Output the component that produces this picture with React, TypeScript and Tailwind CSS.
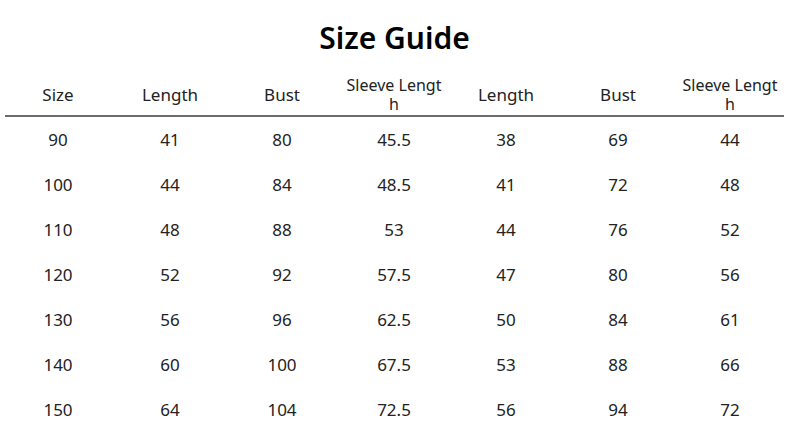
const headers: (string | [string, string])[] = [
  "Size",
  "Length",
  "Bust",
  ["Sleeve Lengt", "h"],
  "Length",
  "Bust",
  ["Sleeve Lengt", "h"],
];

const rows = [
  ["90", "41", "80", "45.5", "38", "69", "44"],
  ["100", "44", "84", "48.5", "41", "72", "48"],
  ["110", "48", "88", "53", "44", "76", "52"],
  ["120", "52", "92", "57.5", "47", "80", "56"],
  ["130", "56", "96", "62.5", "50", "84", "61"],
  ["140", "60", "100", "67.5", "53", "88", "66"],
  ["150", "64", "104", "72.5", "56", "94", "72"],
];

export default function App() {
  return (
    <div
      className="w-[789px] h-[445px] bg-white text-[#222222] overflow-hidden"
      style={{ fontFamily: '"Noto Sans", "Open Sans", sans-serif' }}
    >
      {/* Title */}
      <h1 className="pt-[20px] h-[74px] text-center text-[30px] leading-[36px] font-semibold text-black">
        Size Guide
      </h1>

      {/* Header */}
      <div className="ml-[2px] grid grid-cols-[repeat(7,112px)] h-[41px] items-center">
        {headers.map((h, i) =>
          typeof h === "string" ? (
            <div key={i} className="text-center text-[17px] leading-[20px]">
              {h}
            </div>
          ) : (
            <div key={i} className="flex flex-col items-center text-[16px] leading-[19px]">
              <span>{h[0]}</span>
              <span>{h[1]}</span>
            </div>
          )
        )}
      </div>

      <div className="ml-[5px] w-[779px] h-[2px] bg-[#6b6b6b]" />

      {/* Rows */}
      {rows.map((r, ri) => (
        <div key={ri} className="ml-[2px] grid grid-cols-[repeat(7,112px)] h-[45px] items-center">
          {r.map((c, ci) => (
            <div key={ci} className="text-center text-[17px] leading-[20px]">
              {c}
            </div>
          ))}
        </div>
      ))}
    </div>
  );
}
